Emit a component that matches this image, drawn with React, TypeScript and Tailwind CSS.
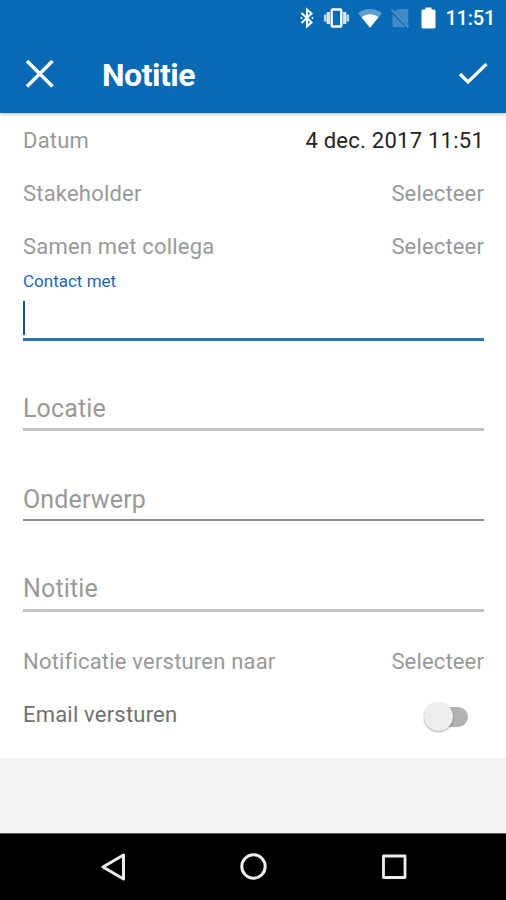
import { useState } from "react";

type SelectRowProps = {
  label: string;
  value: string;
  filled?: boolean;
};

function SelectRow({ label, value, filled = false }: SelectRowProps) {
  return (
    <div className="flex h-[53px] items-center justify-between text-[22px] tracking-[0.2px] text-[#999999]">
      <span>{label}</span>
      <span className={filled ? "tracking-[0.25px] text-[#222222]" : "tracking-[0.15px]"}>{value}</span>
    </div>
  );
}

function TextRow({ label, line }: { label: string; line: string }) {
  return (
    <div className={`flex items-end text-[25px] leading-[32px] tracking-[0.15px] text-[#999999] ${line}`}>
      {label}
    </div>
  );
}

function StatusBar() {
  return (
    <div className="flex h-[37px] items-center pr-[11px] pb-[2px] text-white">
      <svg className="ml-auto h-[22px] w-[14px]" viewBox="0 0 14 22" fill="none" stroke="currentColor" strokeWidth="2.1">
        <path d="M1.5 6 11.5 15.5 7 19.5V2.5L11.5 6.5 1.5 16" />
        <circle cx="1.5" cy="11" r="1" fill="currentColor" stroke="none" />
        <circle cx="12.5" cy="11" r="1" fill="currentColor" stroke="none" />
      </svg>
      <svg className="ml-[9px] h-[22px] w-[27px]" viewBox="0 0 27 22" fill="none" stroke="currentColor">
        <rect x="8.7" y="2.5" width="9.6" height="17" rx="1" strokeWidth="2.4" />
        <path d="M5.3 5v12M21.7 5v12" strokeWidth="3.2" opacity=".85" />
        <path d="M2.2 7.5v7M24.8 7.5v7" strokeWidth="2.6" opacity=".75" />
      </svg>
      <svg className="ml-[7px] h-[20px] w-[26px]" viewBox="0 0 26 20" fill="currentColor">
        <path d="M1 5.2C8-.3 18-.3 25 5.2L13 19.7Z" opacity=".35" />
        <path d="M4.5 9.2C9.5 5.2 16.5 5.2 21.5 9.2L13 19.7Z" />
      </svg>
      <svg className="ml-[7px] h-[22px] w-[20px]" viewBox="0 0 20 22">
        <path d="M8 2h9q1.3 0 1.3 1.3V18.5L4.5 4.5ZM2.5 7 15.5 20H4q-1.5 0-1.5-1.5Z" fill="#438bc6" />
        <path d="m1.5 2.5 17 18" stroke="#5799cd" strokeWidth="1.7" />
      </svg>
      <svg className="ml-[11px] h-[22px] w-[15px]" viewBox="0 0 15 22" fill="currentColor">
        <path d="M4.5.5h6v2H13q1.5 0 1.5 1.5v16q0 1.5-1.5 1.5H2Q.5 21.5.5 20V4Q.5 2.5 2 2.5h2.5Z" />
      </svg>
      <span className="ml-[10px] text-[20px] font-medium leading-6 tracking-[-0.25px]">11:51</span>
    </div>
  );
}

function Toolbar() {
  return (
    <div className="flex h-[76px] items-center pr-[18px] pl-[25px] text-white">
      <svg className="h-[30px] w-[30px]" viewBox="0 0 30 30" fill="none" stroke="currentColor" strokeWidth="3.5">
        <path d="m2 1 25.5 25.5M27.5 1 2 26.5" />
      </svg>
      <h1 className="ml-[47px] text-[32px] font-bold leading-9 tracking-[-0.5px]">Notitie</h1>
      <svg className="ml-auto h-[24px] w-[30px]" viewBox="0 0 30 24" fill="none" stroke="currentColor" strokeWidth="3.2">
        <path d="m2 11 8 8L28.5 1" />
      </svg>
    </div>
  );
}

function NavigationBar() {
  return (
    <nav className="flex h-[67px] items-center justify-between border-t border-[#555555] bg-black pr-[99px] pl-[101px]">
      <svg className="h-[28px] w-[26px]" viewBox="0 0 26 28" fill="none" stroke="#eeeeee" strokeWidth="3" strokeLinejoin="round">
        <path d="M2 14 22.5 2v24Z" />
      </svg>
      <svg className="h-[28px] w-[28px]" viewBox="0 0 28 28" fill="none" stroke="#eeeeee" strokeWidth="3">
        <circle cx="13.5" cy="13.5" r="11.7" />
      </svg>
      <svg className="h-[26px] w-[26px]" viewBox="0 0 26 26" fill="none" stroke="#eeeeee" strokeWidth="2.8" strokeLinejoin="round">
        <rect x="2.5" y="2" width="21.5" height="21.5" />
      </svg>
    </nav>
  );
}

export default function App() {
  const [sendEmail, setSendEmail] = useState(false);

  return (
    <div className="flex h-[900px] w-[506px] flex-col overflow-hidden bg-[#f5f5f5] font-[Roboto,sans-serif]">
      <header className="z-10 bg-[#0869b5] shadow-[0_1px_3px_rgba(0,0,0,0.3)]">
        <StatusBar />
        <Toolbar />
      </header>

      <main className="h-[645px] bg-white pr-[22px] pl-[23px] pt-[1px]">
        <SelectRow label="Datum" value="4 dec. 2017 11:51" filled />
        <SelectRow label="Stakeholder" value="Selecteer" />
        <SelectRow label="Samen met collega" value="Selecteer" />

        <div className="h-[68px] border-b-[3px] border-[#2e70b7]">
          <div className="text-[17px] leading-[17px] text-[#1c65b5]">Contact met</div>
          <div className="mt-[11px] h-[34px] w-[2px] bg-[#164d9e]" />
        </div>
        <TextRow label="Locatie" line="h-[90px] border-b-[3px] border-[#c3c3c3] pb-[3px]" />
        <TextRow label="Onderwerp" line="h-[90px] border-b-2 border-[#8b8b8b] pb-[3px]" />
        <TextRow label="Notitie" line="h-[91px] border-b-[3px] border-[#c3c3c3] pb-[4px]" />

        <div className="mt-[23px]">
          <SelectRow label="Notificatie versturen naar" value="Selecteer" />
        </div>
        <div className="flex h-[53px] items-center justify-between pr-[16px] text-[22px] tracking-[0.2px] text-[#707070]">
          <span>Email versturen</span>
          <button
            type="button"
            role="switch"
            aria-checked={sendEmail}
            aria-label="Email versturen"
            onClick={() => setSendEmail(!sendEmail)}
            className={`mt-[4px] flex h-[20px] w-[44px] items-center rounded-full bg-[#b2b2b2] ${sendEmail ? "justify-end" : "justify-start"}`}
          >
            <span className="h-[29px] w-[29px] shrink-0 rounded-full bg-[#eeeeee] shadow-[0_1px_2px_rgba(0,0,0,0.35)]" />
          </button>
        </div>
      </main>

      <div className="flex-1" />
      <NavigationBar />
    </div>
  );
}
